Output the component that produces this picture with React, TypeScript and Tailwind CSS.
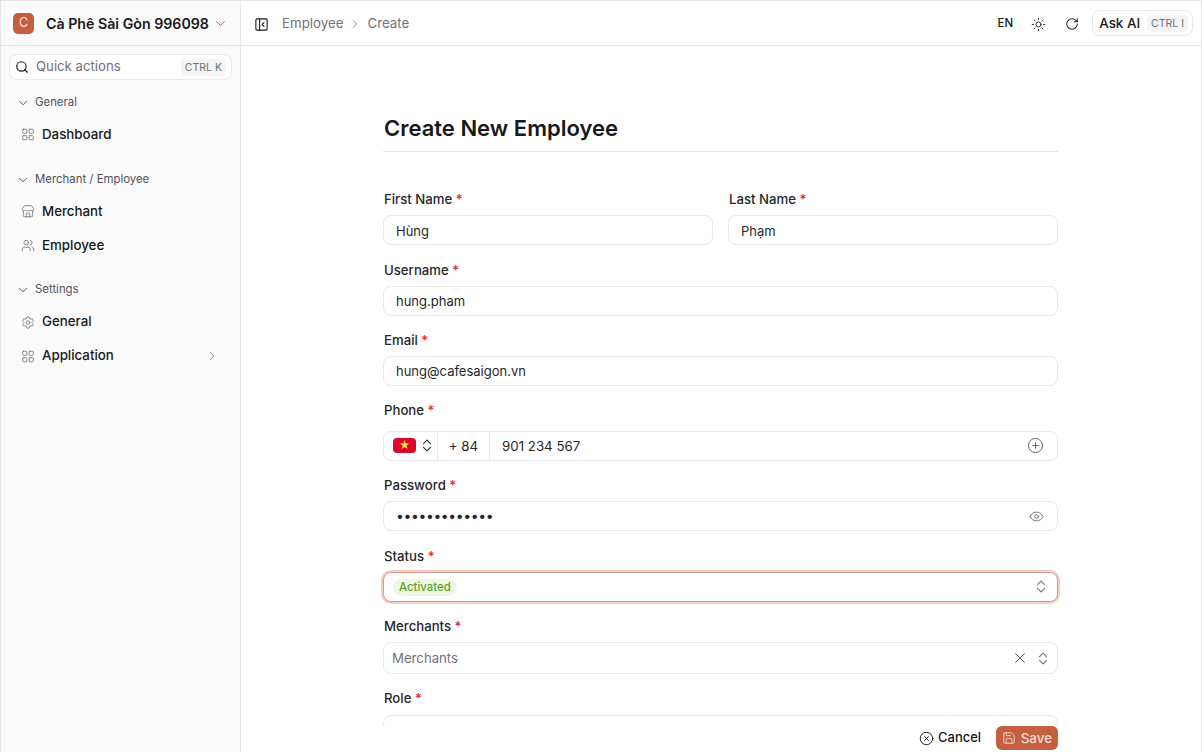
import React from 'react';
import {
  ChevronDown,
  ChevronRight,
  CircleX,
  CirclePlus,
  Eye,
  LayoutGrid,
  PanelLeftClose,
  RotateCw,
  Save,
  Search,
  Settings,
  Store,
  Sun,
  Users,
  X,
} from 'lucide-react';

const font = "font-['Inter',sans-serif]";

const UpDown = ({ className = '' }: { className?: string }) => (
  <svg
    viewBox="0 0 10 13"
    className={`h-[13px] w-[10px] fill-none stroke-[1.1] ${className}`}
    strokeLinecap="round"
    strokeLinejoin="round"
  >
    <path d="M1.5 4.6 5 1.2l3.5 3.4" />
    <path d="M1.5 8.4 5 11.8l3.5-3.4" />
  </svg>
);

const Group = ({ label }: { label: string }) => (
  <div className="flex h-5 items-center gap-[5px] pl-[15px] text-[11.4px] text-[#52525b]">
    <ChevronDown size={14} strokeWidth={1.5} className="text-[#3f3f46]" />
    <span>{label}</span>
  </div>
);

const NavItem = ({
  icon,
  label,
  arrow,
}: {
  icon: React.ReactNode;
  label: string;
  arrow?: boolean;
}) => (
  <div className="flex h-[34px] items-center pl-[20px] pr-[21px] text-[13.3px] font-medium text-[#18181b]">
    <span className="mr-[7px] flex w-[14px] justify-center text-[#71717a]">{icon}</span>
    <span className="flex-1">{label}</span>
    {arrow && <ChevronRight size={14} strokeWidth={1.5} className="text-[#71717a]" />}
  </div>
);

const Label = ({ text }: { text: string }) => (
  <div className="h-5 pl-[1px] text-[13.2px] font-medium leading-5 text-[#27272a]">
    {text} <span className="text-[#dc2626]">*</span>
  </div>
);

const box = 'flex items-center rounded-[8px] border border-[#e8e8ea] bg-white text-[13px] text-[#27272a]';

const Field = ({ label, value, className = '' }: { label: string; value: string; className?: string }) => (
  <div className={className}>
    <Label text={label} />
    <div className={`${box} mt-[6px] h-[30px] px-3`}>
      <span className="mt-[2px]">{value}</span>
    </div>
  </div>
);

const Kbd = ({ children }: { children: React.ReactNode }) => (
  <span className="rounded-[4px] bg-[#f4f4f5] px-[4px] text-[10.5px] leading-[17px] text-[#71717a]">{children}</span>
);

export default function App() {
  return (
    <div className={`${font} flex h-[752px] w-[1202px] overflow-hidden border border-b-0 border-[#e5e5e7] bg-white`}>
      {/* Sidebar */}
      <aside className="flex w-[240px] shrink-0 flex-col border-r border-[#e5e5e7] bg-[#fafafa]">
        <div className="flex h-[45px] shrink-0 items-center border-b border-[#e5e5e7] pl-3 pt-[1px]">
          <div className="flex h-[21px] w-[21px] items-center justify-center rounded-[5px] bg-[#c4603f] text-[12.5px] text-[#fbe9e3]">
            C
          </div>
          <span className="ml-[12px] mt-[1px] whitespace-nowrap text-[14.2px] font-semibold text-[#18181b]">
            Cà Phê Sài Gòn 996098
          </span>
          <ChevronDown size={15} strokeWidth={1.5} className="ml-[4px] text-[#71717a]" />
        </div>

        <div className="px-2 pt-2">
          <div className="flex h-[26px] items-center rounded-[8px] border border-[#e8e8ea] bg-white pl-[5px] pr-[5px]">
            <Search size={14} strokeWidth={2} className="text-[#18181b]" />
            <span className="ml-[7px] flex-1 text-[13.2px] text-[#71717a]">Quick actions</span>
            <Kbd>CTRL K</Kbd>
          </div>
        </div>

        <div className="mt-[13px]">
          <Group label="General" />
          <div className="mt-[4.5px]">
            <NavItem icon={<LayoutGrid size={15} strokeWidth={1.4} />} label="Dashboard" />
          </div>
        </div>
        <div className="mt-[18px]">
          <Group label="Merchant / Employee" />
          <div className="mt-[5px]">
            <NavItem icon={<Store size={15} strokeWidth={1.4} />} label="Merchant" />
            <NavItem icon={<Users size={15} strokeWidth={1.4} />} label="Employee" />
          </div>
        </div>
        <div className="mt-[17.5px]">
          <Group label="Settings" />
          <div className="mt-[5px]">
            <NavItem icon={<Settings size={15} strokeWidth={1.4} />} label="General" />
            <NavItem icon={<LayoutGrid size={15} strokeWidth={1.4} />} label="Application" arrow />
          </div>
        </div>
      </aside>

      {/* Main */}
      <div className="flex min-w-0 flex-1 flex-col">
        <header className="flex h-[45px] shrink-0 items-center border-b border-[#e5e5e7] pl-[13px] pr-2 pt-[2px]">
          <PanelLeftClose size={15} strokeWidth={1.75} className="text-[#18181b]" />
          <span className="ml-[13px] text-[13.3px] text-[#71717a]">Employee</span>
          <ChevronRight size={14} strokeWidth={1.5} className="mx-[5px] text-[#71717a]" />
          <span className="text-[13.3px] text-[#71717a]">Create</span>
          <div className="ml-auto flex items-center">
            <span className="text-[11.5px] font-medium text-[#18181b]">EN</span>
            <Sun size={15} strokeWidth={1.5} className="ml-[18px] text-[#27272a]" />
            <RotateCw size={14} strokeWidth={1.75} className="ml-[19px] text-[#27272a]" />
            <div className="-mt-[2px] ml-[13px] flex h-[26px] items-center gap-[7px] rounded-[8px] border border-[#e8e8ea] pl-[6px] pr-[4px]">
              <span className="text-[13.4px] font-medium text-[#18181b]">Ask AI</span>
              <Kbd>CTRL I</Kbd>
            </div>
          </div>
        </header>

        <div className="min-h-0 flex-1 overflow-hidden">
          <div className="ml-[142px] w-[675px] pt-[66px]">
            <h1 className="border-b border-[#e5e5e7] pb-[7px] pl-[1px] text-[22px] font-semibold leading-8 text-[#18181b]">
              Create New Employee
            </h1>

            <div className="mt-[37.3px] flex flex-col gap-[14.4px]">
              <div className="grid grid-cols-2 gap-[15px]">
                <Field label="First Name" value="Hùng" />
                <Field label="Last Name" value="Phạm" />
              </div>
              <Field label="Username" value="hung.pham" />
              <Field label="Email" value="hung@cafesaigon.vn" />

              <div>
                <Label text="Phone" />
                <div className={`${box} mt-[10.3px] h-[30px]`}>
                  <div className="flex h-full w-[54px] items-center border-r border-[#e8e8ea] pl-[9px]">
                    <span className="flex h-[15px] w-[23px] items-center justify-center rounded-[4px] bg-[#da0a2a] text-[11px] leading-none text-[#ffdf3d]">
                      ★
                    </span>
                    <UpDown className="ml-[6px] stroke-[#27272a]" />
                  </div>
                  <div className="flex h-full w-[52px] items-center justify-center border-r border-[#e8e8ea] pt-[2px] text-[13.3px]">
                    + 84
                  </div>
                  <span className="ml-[12px] mt-[2px] flex-1 text-[13.3px]">901 234 567</span>
                  <CirclePlus size={17} strokeWidth={1.25} className="mr-[13.5px] text-[#52525b]" />
                </div>
              </div>

              <div>
                <Label text="Password" />
                <div className={`${box} mt-[6px] h-[30px] pl-3 pr-[13px]`}>
                  <span className="flex-1 text-[14px] leading-none tracking-[-0.4px]">•••••••••••••</span>
                  <Eye size={15} strokeWidth={1.25} className="text-[#52525b]" />
                </div>
              </div>

              <div>
                <Label text="Status" />
                <div className="mt-[6.3px] flex h-[30px] items-center rounded-[8px] border border-[#dd9a85] bg-white pl-[9px] pr-[11px] shadow-[0_0_0_2px_#f0cfc4]">
                  <span className="mt-[2px] rounded-full bg-[#eef7e6] px-[6px] text-[11.4px] font-medium leading-[17px] text-[#5fa319]">
                    Activated
                  </span>
                  <UpDown className="ml-auto stroke-[#71717a]" />
                </div>
              </div>

              <div>
                <Label text="Merchants" />
                <div className={`${box} mt-[6px] h-[32px] pl-2 pr-[9px]`}>
                  <span className="mt-[1px] flex-1 text-[13.2px] text-[#71717a]">Merchants</span>
                  <X size={18} strokeWidth={1.25} className="mr-[9px] text-[#52525b]" />
                  <UpDown className="stroke-[#71717a]" />
                </div>
              </div>

              <div className="-mt-[1px]">
                <Label text="Role" />
                <div className={`${box} mt-[7px] h-[30px]`} />
              </div>
            </div>
          </div>
        </div>

        <footer className="flex h-[26px] shrink-0 items-start justify-end bg-white pr-[143px]">
          <div className="flex items-center gap-[15px]">
            <div className="flex h-6 items-center gap-[4px] text-[13px] font-medium text-[#18181b]">
              <CircleX size={15} strokeWidth={1.5} />
              Cancel
            </div>
            <div className="flex h-6 items-center gap-[4.5px] rounded-[6px] bg-[#c4603f] px-[6px] text-[13.4px] font-medium text-[#f8dcd2]">
              <Save size={14} strokeWidth={1.5} />
              Save
            </div>
          </div>
        </footer>
      </div>
    </div>
  );
}
